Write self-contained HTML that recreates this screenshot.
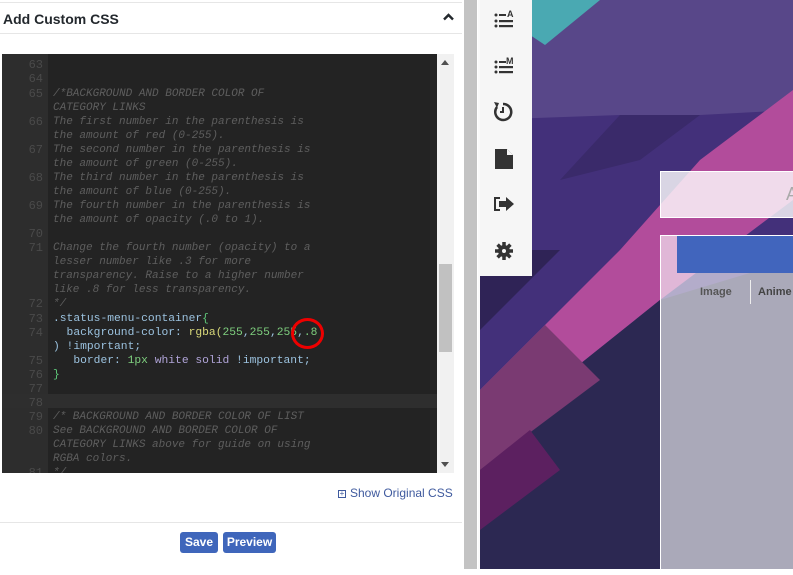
<!DOCTYPE html>
<html><head><style>
*{margin:0;padding:0;box-sizing:border-box}
body{width:793px;height:569px;overflow:hidden;position:relative;background:#fff;font-family:"Liberation Sans",sans-serif}
.left{position:absolute;left:0;top:0;width:462px;height:569px;background:#fff}
.hdr{position:absolute;left:0;top:2px;width:462px;height:32px;border-top:1px solid #e6e6e6;border-bottom:1px solid #e6e6e6}
.hdr b{position:absolute;left:3px;top:8px;font-size:14px;color:#23282d}
.ed{position:absolute;left:2px;top:54px;width:435px;height:419px;background:#232323;overflow:hidden}
.gut{position:absolute;left:0;top:0;width:46px;height:419px;background:#2d2d2d}
.ln{position:absolute;left:0;width:41px;text-align:right;font:12px/14px "Liberation Mono",monospace;color:#4a4a4a}
.tx{position:absolute;left:51px;font:11px/14px "Liberation Mono",monospace;white-space:pre;color:#5e5e5e;font-style:italic}
.sb{position:absolute;left:437px;top:54px;width:17px;height:419px;background:#f1f1f1}
.thumb{position:absolute;left:439px;top:264px;width:13px;height:88px;background:#c1c1c1}
.btn{position:absolute;top:532px;height:21px;background:#3f66bb;color:#fff;font-size:12px;font-weight:bold;border-radius:3px;text-align:center;line-height:21px}
</style></head><body>
<div class="left">
<div class="hdr"><b>Add Custom CSS</b>
<svg style="position:absolute;left:443px;top:10px" width="11" height="8" viewBox="0 0 11 8"><path d="M1 6.5L5.5 2L10 6.5" stroke="#23282d" stroke-width="2.4" fill="none"/></svg></div>
<div class="ed">
<div class="gut"></div>
<div style="position:absolute;left:0;top:340px;width:435px;height:14px;background:#2e2e2e"></div>
<div class="ln" style="top:4px">63</div>
<div class="ln" style="top:18px">64</div>
<div class="ln" style="top:33px">65</div>
<div class="ln" style="top:61px">66</div>
<div class="ln" style="top:89px">67</div>
<div class="ln" style="top:117px">68</div>
<div class="ln" style="top:145px">69</div>
<div class="ln" style="top:173px">70</div>
<div class="ln" style="top:187px">71</div>
<div class="ln" style="top:243px">72</div>
<div class="ln" style="top:258px">73</div>
<div class="ln" style="top:272px">74</div>
<div class="ln" style="top:300px">75</div>
<div class="ln" style="top:314px">76</div>
<div class="ln" style="top:328px">77</div>
<div class="ln" style="top:342px">78</div>
<div class="ln" style="top:356px">79</div>
<div class="ln" style="top:370px">80</div>
<div class="ln" style="top:412px">81</div>
<div class="tx" style="top:33px">/*BACKGROUND AND BORDER COLOR OF
CATEGORY LINKS
The first number in the parenthesis is
the amount of red (0-255).
The second number in the parenthesis is
the amount of green (0-255).
The third number in the parenthesis is
the amount of blue (0-255).
The fourth number in the parenthesis is
the amount of opacity (.0 to 1).

Change the fourth number (opacity) to a
lesser number like .3 for more
transparency. Raise to a higher number
like .8 for less transparency.
*/</div>
<div class="tx" style="top:258px;font-style:normal;color:#9cc3e0;font-size:11.3px">.status-menu-container<span style="color:#5fc97a">{</span>
  background-color: <span style="color:#d9d97a">rgba(</span><span style="color:#7fd07f">255</span>,<span style="color:#7fd07f">255</span>,<span style="color:#7fd07f">255</span>,<span style="color:#7fd07f">.8</span>
) !important;
   border: <span style="color:#7fd07f">1px</span> <span style="color:#b0a4d8">white solid</span> !important;
<span style="color:#5fc97a">}</span></div>
<div class="tx" style="top:356px">/* BACKGROUND AND BORDER COLOR OF LIST
See BACKGROUND AND BORDER COLOR OF
CATEGORY LINKS above for guide on using
RGBA colors.
*/</div>
<div style="position:absolute;left:289px;top:264px;width:33px;height:31px;border:3px solid #e00;border-radius:50%"></div>
</div>
<div class="sb"></div>
<div class="thumb"></div>
<svg style="position:absolute;left:441px;top:60px" width="8" height="5"><path d="M0 5L4 0L8 5Z" fill="#505050"/></svg>
<svg style="position:absolute;left:441px;top:462px" width="8" height="5"><path d="M0 0L4 5L8 0Z" fill="#505050"/></svg>
<div style="position:absolute;left:338px;top:486px;font-size:12px;color:#3f5a9e"><span style="display:inline-block;width:8px;height:8px;border:1px solid #3f5a9e;font-size:8px;line-height:6px;text-align:center;margin-right:4px;vertical-align:1px">+</span>Show Original CSS</div>
<div style="position:absolute;left:0;top:522px;width:462px;height:1px;background:#e6e6e6"></div>
<div class="btn" style="left:180px;width:38px">Save</div>
<div class="btn" style="left:223px;width:53px">Preview</div>
</div>
<div style="position:absolute;left:462px;top:0;width:18px;height:569px;background:#fff"></div>
<div style="position:absolute;left:464px;top:0;width:13px;height:569px;background:#c3c3c3"></div>
<svg style="position:absolute;left:480px;top:0" width="313" height="569" viewBox="480 0 313 569">
<rect x="480" y="0" width="313" height="569" fill="#43307a"/>
<polygon points="480,0 793,0 793,110 700,115 620,115 480,120" fill="#584789"/>
<polygon points="530,0 600,0 545,45 515,25" fill="#4aa9b2"/>
<polygon points="620,115 700,115 640,160 560,180" fill="#3a2a6a"/>
<polygon points="793,90 793,200 660,300 560,380 480,440 480,390 620,250 700,160" fill="#b24c9b"/>
<polygon points="480,440 560,380 660,300 793,260 793,569 480,569" fill="#2c2852"/>
<polygon points="480,390 545,325 600,380 480,470" fill="#7a3a72"/>
<polygon points="480,250 560,250 480,330" fill="#2f2356"/>
<polygon points="480,470 530,430 560,470 480,530" fill="#5c2060"/>
</svg>
<div style="position:absolute;left:478px;top:0;width:2px;height:569px;background:#fafafa"></div>
<div style="position:absolute;left:480px;top:0;width:52px;height:276px;background:#f6f6f6"></div>
<svg style="position:absolute;left:480px;top:0" width="52" height="276" viewBox="0 0 52 276">
<g fill="#333">
<circle cx="16" cy="15" r="1.5"/><circle cx="16" cy="21" r="1.5"/><circle cx="16" cy="26" r="1.5"/>
<rect x="19" y="14" width="7" height="2"/><rect x="19" y="20" width="14" height="2.2"/><rect x="19" y="25" width="14" height="2.2"/>
<text x="27" y="17" font-size="9" font-weight="bold" font-family="Liberation Sans">A</text>
<circle cx="16" cy="62" r="1.5"/><circle cx="16" cy="67" r="1.5"/><circle cx="16" cy="72" r="1.5"/>
<rect x="19" y="61" width="7" height="2"/><rect x="19" y="66" width="14" height="2.2"/><rect x="19" y="71" width="14" height="2.2"/>
<text x="26" y="64" font-size="9" font-weight="bold" font-family="Liberation Sans">M</text>
<path d="M23 104a8 8 0 1 1-6 3" stroke="#333" stroke-width="2.5" fill="none"/><path d="M14 102l5 1-2 5z"/><path d="M23 107v5h-3" stroke="#333" stroke-width="2" fill="none"/>
<path d="M15 149h12l6 6v14h-18z" fill="#333"/><path d="M27 149v6h6" fill="#f6f6f6"/>
<path d="M20 198h-5v12h5" stroke="#333" stroke-width="2" fill="none"/><path d="M19 201h7v-4l8 7-8 7v-4h-7z"/>
<circle cx="24" cy="251" r="6"/><g stroke="#333" stroke-width="3.5"><path d="M24 242v18M15 251h18M17.6 244.6l12.8 12.8M30.4 244.6l-12.8 12.8"/></g><circle cx="24" cy="251" r="2" fill="#f6f6f6"/>
</g></svg>
<div style="position:absolute;left:660px;top:171px;width:140px;height:47px;border:1px solid #fff;background:rgba(255,255,255,.8)"><span style="position:absolute;left:125px;top:12px;font-size:18px;color:#aaa">A</span></div>
<div style="position:absolute;left:660px;top:235px;width:140px;height:340px;border:1px solid #fff;background:rgba(255,255,255,.6)"></div>
<div style="position:absolute;left:677px;top:236px;width:120px;height:37px;background:#4165bd"></div>
<div style="position:absolute;left:700px;top:286px;font-size:11px;font-weight:bold;color:#555">Image</div>
<div style="position:absolute;left:750px;top:280px;width:1px;height:24px;background:#eee"></div>
<div style="position:absolute;left:758px;top:286px;font-size:11px;font-weight:bold;color:#444">Anime</div>
</body></html>
